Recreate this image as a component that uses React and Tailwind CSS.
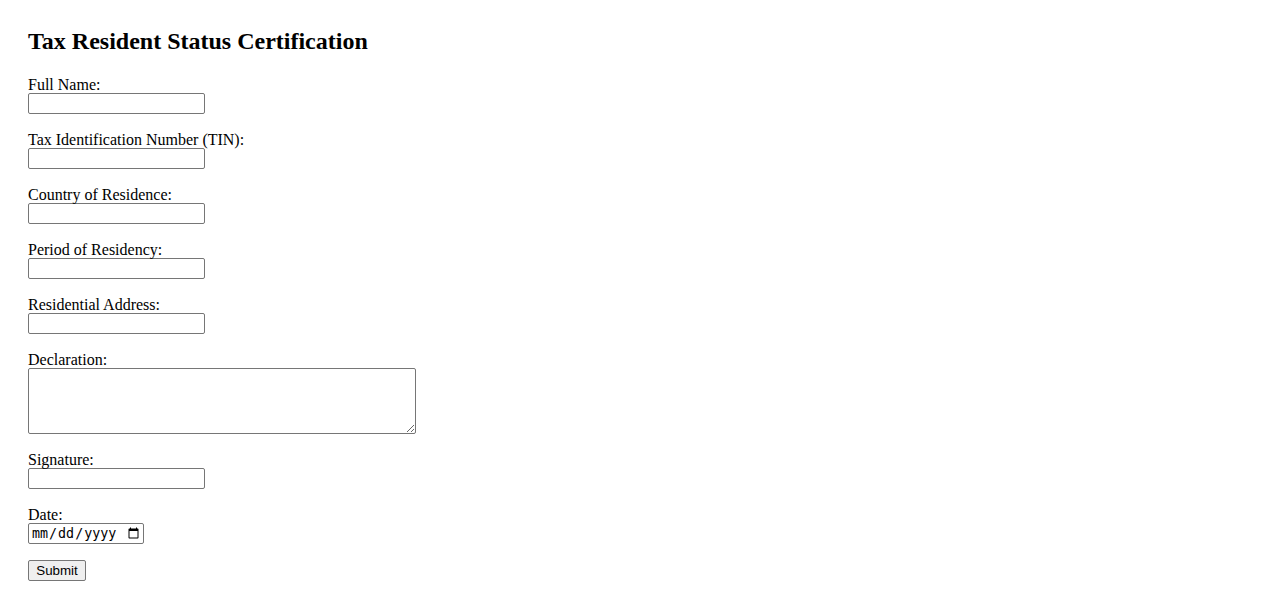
import React, { useState } from "react";

const fields = [
  { id: "fullName", label: "Full Name:" },
  { id: "tin", label: "Tax Identification Number (TIN):" },
  { id: "country", label: "Country of Residence:" },
  { id: "period", label: "Period of Residency:" },
  { id: "address", label: "Residential Address:" },
];

const labelCls = "block h-[19px] leading-[21px]";

const inputCls =
  "block w-[177px] h-[21px] border border-[#767676] rounded-[2px] px-[2px] bg-white text-[13.33px] font-['Liberation_Sans',sans-serif] outline-none";

export default function App() {
  const [form, setForm] = useState({});

  const handleChange = (e) => {
    setForm({ ...form, [e.target.name]: e.target.value });
  };

  const handleSubmit = (e) => {
    e.preventDefault();
    console.log(form);
  };

  return (
    <div className="min-h-screen bg-white text-black px-[28px] pt-[28px] font-['Liberation_Serif',serif]">
      <h2 className="text-[24px] font-bold leading-[27px] mb-[19px]">
        Tax Resident Status Certification
      </h2>
      <form onSubmit={handleSubmit} className="text-[16px]">
        {fields.map((f) => (
          <div key={f.id} className="mb-[15px]">
            <label htmlFor={f.id} className={labelCls}>
              {f.label}
            </label>
            <input id={f.id} name={f.id} type="text" onChange={handleChange} className={inputCls} />
          </div>
        ))}
        <div className="mb-[15px]">
          <label htmlFor="declaration" className={labelCls}>
            Declaration:
          </label>
          <textarea
            id="declaration"
            name="declaration"
            onChange={handleChange}
            className="block w-[388px] h-[66px] border border-[#767676] rounded-[2px] p-[2px] bg-white text-[13.33px] font-['Liberation_Mono',monospace] outline-none resize"
          ></textarea>
        </div>
        <div className="mb-[15px]">
          <label htmlFor="signature" className={labelCls}>
            Signature:
          </label>
          <input id="signature" name="signature" type="text" onChange={handleChange} className={inputCls} />
        </div>
        <div className="mb-[16px]">
          <label htmlFor="date" className={labelCls}>
            Date:
          </label>
          <input
            id="date"
            name="date"
            type="date"
            onChange={handleChange}
            className="block w-[116px] h-[21px] border border-[#767676] rounded-[2px] pl-[2px] pr-[1px] bg-white text-[13.33px] font-['DejaVu_Sans_Mono',monospace] outline-none"
          />
        </div>
        <button
          type="submit"
          className="block w-[58px] h-[21px] border border-[#767676] rounded-[2px] bg-[#efefef] text-[13.33px] leading-[17px] font-['Liberation_Sans',sans-serif]"
        >
          Submit
        </button>
      </form>
    </div>
  );
}
